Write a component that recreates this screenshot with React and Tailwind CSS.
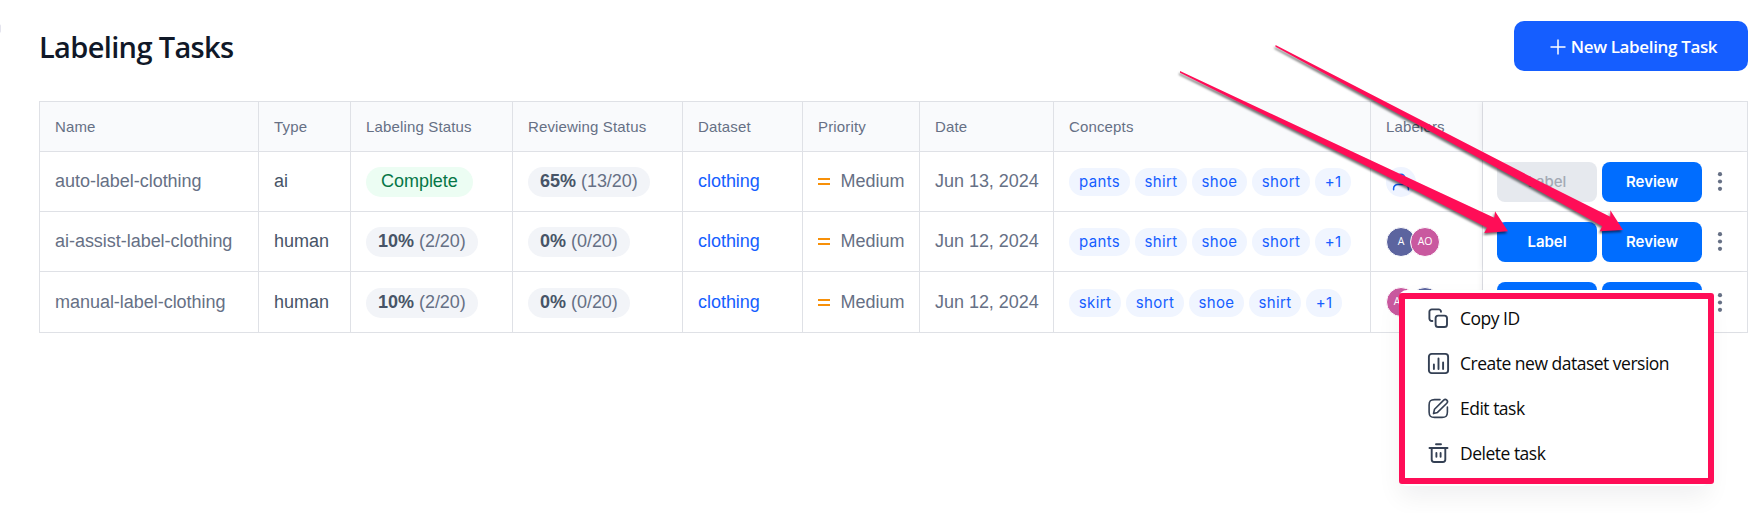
import React from 'react';

const LINE = 'border-[#dfe1e6]';

const COLUMNS = ['Name', 'Type', 'Labeling Status', 'Reviewing Status', 'Dataset', 'Priority', 'Date', 'Concepts', 'Labelers', ''];

const TASKS = [
  {
    name: 'auto-label-clothing',
    type: 'ai',
    labeling: null,
    reviewing: ['65%', '(13/20)'],
    date: 'Jun 13, 2024',
    concepts: ['pants', 'shirt', 'shoe', 'short', '+1'],
    labelers: [],
    canLabel: false,
  },
  {
    name: 'ai-assist-label-clothing',
    type: 'human',
    labeling: ['10%', '(2/20)'],
    reviewing: ['0%', '(0/20)'],
    date: 'Jun 12, 2024',
    concepts: ['pants', 'shirt', 'shoe', 'short', '+1'],
    labelers: [['A', 'bg-[#5c649f]'], ['AO', 'bg-[#c9599f]']],
    canLabel: true,
  },
  {
    name: 'manual-label-clothing',
    type: 'human',
    labeling: ['10%', '(2/20)'],
    reviewing: ['0%', '(0/20)'],
    date: 'Jun 12, 2024',
    concepts: ['skirt', 'short', 'shoe', 'shirt', '+1'],
    labelers: [['AO', 'bg-[#c9599f]'], ['A', 'bg-[#5c649f]']],
    canLabel: true,
    tall: true,
  },
];

const CONCEPT_WIDTHS = {
  pants: 'w-[61px]',
  shirt: 'w-[52px]',
  skirt: 'w-[52px]',
  shoe: 'w-[55px]',
  short: 'w-[58px]',
  '+1': 'w-[36px]',
};

const GRID = 'grid grid-cols-[219px_92px_162px_170px_120px_117px_134px_317px_112px_264px]';

function Cell({ children, className = '' }) {
  return <div className={`flex items-center border-r pl-[15px] whitespace-nowrap ${LINE} ${className}`}>{children}</div>;
}

function Progress({ value }) {
  return (
    <span className="flex h-[30px] items-center gap-[5px] rounded-full bg-[#f2f4f8] px-3 text-[#667085]">
      <b className="font-bold text-[#475467]">{value[0]}</b>
      <span>{value[1]}</span>
    </span>
  );
}

function Action({ children, disabled }) {
  return (
    <button
      className={`h-10 w-[100px] rounded-lg pt-0.5 font-[Inter,sans-serif] text-[15px] ${
        disabled ? 'bg-[#e6e9ee] font-medium text-[#a3a9b5]' : 'bg-[#006dff] font-semibold text-white'
      }`}
    >
      {children}
    </button>
  );
}

function Dots({ className }) {
  return (
    <svg className={`ml-[9.500px] ${className}`} width="6" height="20" viewBox="0 0 6 20" fill="#667085">
      <circle cx="3" cy="2.2" r="2.1" />
      <circle cx="3" cy="9.5" r="2.1" />
      <circle cx="3" cy="16.8" r="2.1" />
    </svg>
  );
}

function Labelers({ people }) {
  if (!people.length) {
    return (
      <span className="flex h-[30px] w-[30px] items-center justify-center rounded-full bg-[#eff4ff]">
        <svg width="18" height="18" viewBox="0 0 18 18" fill="none" stroke="#155eef" strokeWidth="1.500" strokeLinecap="round">
          <circle cx="9" cy="5" r="3.800" />
          <path d="M1.600 16.800v-1.200A4.200 4.200 0 0 1 5.800 11.400h6.400A4.200 4.200 0 0 1 16.400 15.600v1.200" />
        </svg>
      </span>
    );
  }
  return (
    <span className="flex">
      {people.map(([label, color], i) => (
        <span
          key={label}
          className={`flex h-[30px] w-[30px] items-center justify-center rounded-full border border-white font-['Open_Sans',sans-serif] text-[10.500px] font-medium text-white ${color} ${i ? '-ml-1.5' : ''}`}
        >
          {label}
        </span>
      ))}
    </span>
  );
}

function TaskRow({ task }) {
  const shift = task.tall ? 'pt-px' : '';
  return (
    <div className={`${GRID} border-b text-[18px] tracking-[-0.03px] ${LINE} ${task.tall ? 'h-[61px]' : 'h-[60px]'}`}>
      <Cell className={`text-[#667085] ${shift}`}>{task.name}</Cell>
      <Cell className={`text-[#475467] ${shift}`}>{task.type}</Cell>
      <Cell className={shift}>
        {task.labeling ? (
          <Progress value={task.labeling} />
        ) : (
          <span className="flex h-[30px] items-center rounded-full bg-[#ecfdf3] px-[15px] text-[#067647]">Complete</span>
        )}
      </Cell>
      <Cell className={shift}><Progress value={task.reviewing} /></Cell>
      <Cell className={`text-[#155eff] ${shift}`}>clothing</Cell>
      <Cell className={`text-[#667085] ${shift}`}>
        <span className="mr-[10.500px] flex w-3 flex-col gap-[3px]">
          <i className="h-[2px] bg-[#f79009]" />
          <i className="h-[2px] bg-[#f79009]" />
        </span>
        Medium
      </Cell>
      <Cell className={`text-[#667085] ${shift}`}>{task.date}</Cell>
      <Cell className={`gap-[5px] ${shift}`}>
        {task.concepts.map((c) => (
          <span
            key={c}
            className={`mt-px flex h-7 items-center justify-center rounded-full bg-[#f0f5ff] font-[Inter,sans-serif] text-[15px] tracking-[0.350px] text-[#155eff] ${CONCEPT_WIDTHS[c]}`}
          >
            {c}
          </span>
        ))}
      </Cell>
      <Cell className={task.tall ? 'pb-px' : ''}><Labelers people={task.labelers} /></Cell>
      <div className={`flex items-center gap-[5px] pl-3.5 shadow-[-4px_0_5px_-1px_rgba(16,24,40,0.04)] ${task.tall ? 'pb-px' : ''}`}>
        <Action disabled={!task.canLabel}>Label</Action>
        <Action>Review</Action>
        <Dots className={task.tall ? 'mt-0.5' : ''} />
      </div>
    </div>
  );
}

const MENU = [
  {
    label: 'Copy ID',
    icon: (
      <>
        <rect x="7.600" y="7.600" width="11.400" height="11.400" rx="2.600" />
        <path d="M4.400 13H3.800A2.400 2.400 0 0 1 1.400 10.600V3.800A2.400 2.400 0 0 1 3.800 1.400h6.800A2.400 2.400 0 0 1 13 3.800" />
      </>
    ),
  },
  {
    label: 'Create new dataset version',
    icon: (
      <>
        <rect x="0.900" y="0.900" width="19.200" height="19.200" rx="2.800" />
        <path d="M5.900 11.500V16M10.500 5.500V16M15.100 9.500V16" />
      </>
    ),
  },
  {
    label: 'Edit task',
    icon: (
      <>
        <path d="M12 1.600H6.500C2.500 1.600 1.100 3 1.100 7v7c0 4 1.400 5.400 5.400 5.400h7.500c4 0 5.400-1.400 5.400-5.400V9" strokeWidth="1.600" />
        <path d="M15.700 2.100c1-1 2.200-.9 3.100 0s1 2.100 0 3.100L9.500 14.400l-4 1.200 1-4.300z" strokeWidth="1.600" />
      </>
    ),
  },
  {
    label: 'Delete task',
    icon: (
      <path d="M1.500 5h18M3.700 5v11.500A2.500 2.500 0 0 0 6.200 19h8.600a2.500 2.500 0 0 0 2.500-2.500V5M8.400 10v3.800M12.600 10v3.800M8 1.200h5" />
    ),
  },
];

function ContextMenu() {
  return (
    <div className="absolute top-[290px] left-[1399px] h-[196px] w-[310px] rounded-lg bg-white shadow-[0_12px_24px_rgba(16,24,40,0.06)]">
      <div className="absolute top-[3px] left-0 h-[191px] w-[315px] rounded-[3px] border-[6px] border-[#ff0d57] pl-[23px]">
        {MENU.map((item) => (
          <div key={item.label} className="flex h-[45px] items-center pb-1.5">
            <svg className="overflow-visible" width="21" height="21" viewBox="0 0 21 21" fill="none" stroke="#344054" strokeWidth="1.900" strokeLinecap="round" strokeLinejoin="round">
              {item.icon}
            </svg>
            <span className="ml-[11px] font-['Open_Sans',sans-serif] text-[17.500px] tracking-[-0.500px] whitespace-nowrap text-[#0a0a0a]">{item.label}</span>
          </div>
        ))}
      </div>
    </div>
  );
}

function Arrows() {
  return (
    <svg
      className="pointer-events-none absolute top-0 left-0 overflow-visible drop-shadow-[-1px_2px_1px_rgba(0,0,0,0.55)]"
      width="1760"
      height="300"
      viewBox="0 0 1760 300"
      fill="#ff0d57"
    >
      <path d="M1180 71L1420 183.300L1494.300 217.800L1495 211.300L1508 231.300L1484.300 233L1487 227.800L1420 192.900L1180 72.800Z" />
      <path d="M1275.500 45L1540 181.500L1610.300 216.800L1610.300 210.200L1623 230L1599.800 231.200L1602.300 226.200L1540 191.500L1275.500 46.800Z" />
    </svg>
  );
}

export default function App() {
  return (
    <main className="relative h-[513px] w-[1760px] overflow-hidden bg-white font-['Liberation_Sans',sans-serif]">
      <div className="absolute top-6 -left-[9px] h-[9px] w-2.5 rounded-[2px] bg-[#e4e4ee]" />
      <header className="flex h-[101px] items-start justify-between pt-[21px] pr-3 pl-[39px]">
        <h1 className="pt-[5px] font-['Open_Sans',sans-serif] text-[29px] leading-[42px] font-semibold tracking-[-0.650px] whitespace-nowrap text-[#101828]">Labeling Tasks</h1>
        <button className="flex h-[50px] w-[234px] items-center justify-center gap-[5px] rounded-[10px] bg-[#155eff] pt-px pl-[5px] font-['Open_Sans',sans-serif] text-[17px] font-semibold tracking-[-0.350px] whitespace-nowrap text-white">
          <svg width="16" height="16" viewBox="0 0 16 16" stroke="white" strokeWidth="1.500">
            <path d="M8 0.500v15M0.500 8h15" />
          </svg>
          <span>New Labeling Task</span>
        </button>
      </header>
      <section className={`ml-[39px] w-[1709px] border-x border-t ${LINE}`}>
        <div className={`${GRID} h-[50px] border-b bg-[#f9fafc] text-[15px] tracking-[0.150px] text-[#667085] ${LINE}`}>
          {COLUMNS.map((c, i) =>
            i < 9 ? (
              <Cell key={c} className="pt-0.5">{c}</Cell>
            ) : (
              <div key="actions" className="shadow-[-4px_0_5px_-1px_rgba(16,24,40,0.04)]" />
            ),
          )}
        </div>
        {TASKS.map((task) => (
          <TaskRow key={task.name} task={task} />
        ))}
      </section>
      <ContextMenu />
      <Arrows />
    </main>
  );
}
